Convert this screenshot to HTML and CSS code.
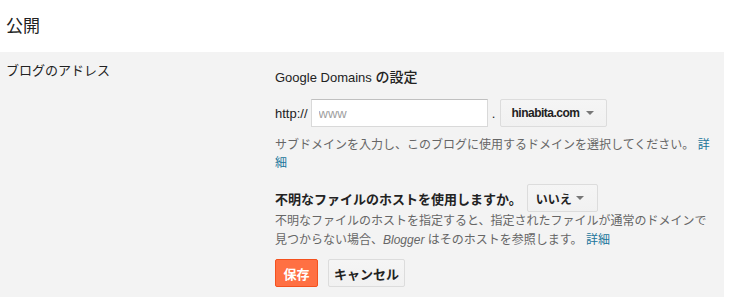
FILE: index.html
```html
<!DOCTYPE html>
<html lang="ja">
<head>
<meta charset="utf-8">
<link rel="stylesheet" href="styles.css">
</head>
<body>
<div class="page">
  <header class="header"><h1 class="title">公開</h1></header>
  <section class="section">
    <div class="label">ブログのアドレス</div>
    <div class="content">
      <div class="heading">Google Domains <span class="heading-ja">の設定</span></div>
      <div class="addr-row">
        <span class="proto">http://</span>
        <input class="sub-input" type="text" placeholder="www">
        <span class="dot">.</span>
        <button class="select-btn"><span class="sel-text sel-domain">hinabita.com</span><span class="caret"></span></button>
      </div>
      <p class="help help-1">サブドメインを入力し、このブログに使用するドメインを選択してください。 <a class="link" href="#">詳細</a></p>
      <div class="question-row">
        <span class="question">不明なファイルのホストを使用しますか。</span>
        <button class="select-btn select-small"><span class="sel-text">いいえ</span><span class="caret"></span></button>
      </div>
      <p class="help help-2">不明なファイルのホストを指定すると、指定されたファイルが通常のドメインで見つからない場合、<i>Blogger</i> はそのホストを参照します。 <a class="link" href="#">詳細</a></p>
      <div class="actions">
        <button class="btn btn-save">保存</button>
        <button class="btn btn-cancel">キャンセル</button>
      </div>
    </div>
  </section>
</div>
</body>
</html>
```

FILE: styles.css
```css
* { box-sizing: border-box; }
html, body { margin: 0; padding: 0; background: #fff; }
body {
  font-family: "Liberation Sans", Arial, "Noto Sans CJK JP", sans-serif;
  font-size: 13px;
  color: #222;
}
.page { width: 731px; }
.header {
  height: 52px;
  display: flex;
  align-items: center;
  padding: 2px 0 0 6px;
}
.title {
  margin: 0;
  font-size: 17px;
  font-weight: normal;
  color: #222;
  line-height: 20px;
}
.section {
  width: 724px;
  background: #f3f3f3;
  display: flex;
  padding: 0 0 10px 0;
}
.label {
  width: 275px;
  flex: none;
  padding: 10px 0 0 6px;
  line-height: 18px;
  color: #222;
}
.content {
  width: 440px;
  flex: none;
  padding-top: 16px;
}
.heading {
  line-height: 18px;
  color: #222;
}
.heading-ja { font-size: 14px; font-weight: 500; }
.addr-row {
  display: flex;
  align-items: center;
  margin-top: 12px;
  height: 28px;
}
.proto { color: #222; margin-right: 3px; }
.sub-input {
  width: 177px;
  height: 28px;
  border: 1px solid #d9d9d9;
  border-top-color: #c0c0c0;
  background: #fff;
  padding: 0 7px;
  font: inherit;
  font-size: 13px;
  color: #222;
  outline: none;
}
.sub-input::placeholder { color: #a0a0a0; }
.dot { width: 12px; text-align: center; color: #222; }
.select-btn {
  height: 28px;
  width: 107px;
  border: 1px solid #dcdcdc;
  border-radius: 2px;
  background: linear-gradient(#f5f5f5, #f1f1f1);
  display: flex;
  align-items: center;
  justify-content: space-between;
  padding: 0 12px 0 11px;
  font: inherit;
  font-weight: bold;
  font-size: 12px;
  color: #222;
}
.sel-domain { letter-spacing: -0.5px; }
.caret {
  width: 0;
  height: 0;
  border-left: 4px solid transparent;
  border-right: 4px solid transparent;
  border-top: 4px solid #777;
}
.help {
  margin: 0;
  color: #666;
  font-size: 12px;
}
.help-1 { margin-top: 9px; line-height: 18px; }
.link { color: #21759b; text-decoration: none; }
.question-row {
  display: flex;
  align-items: center;
  margin-top: 12px;
  height: 28px;
}
.question { font-weight: bold; color: #222; margin-right: 5px; }
.select-small { width: 71px; padding: 0 13px 0 8px; }
.help-2 { margin-top: 0; line-height: 19px; }
.help-2 i { font-style: italic; }
.actions {
  display: flex;
  gap: 10px;
  margin-top: 9px;
}
.btn {
  height: 28px;
  border-radius: 2px;
  font: inherit;
  font-weight: bold;
  font-size: 13px;
  padding: 0;
}
.btn-save {
  width: 43px;
  background: #ff7043;
  border: 1px solid #f4511e;
  color: #fff;
}
.btn-cancel {
  width: 77px;
  background: linear-gradient(#f5f5f5, #f1f1f1);
  border: 1px solid #dcdcdc;
  color: #222;
}
```
